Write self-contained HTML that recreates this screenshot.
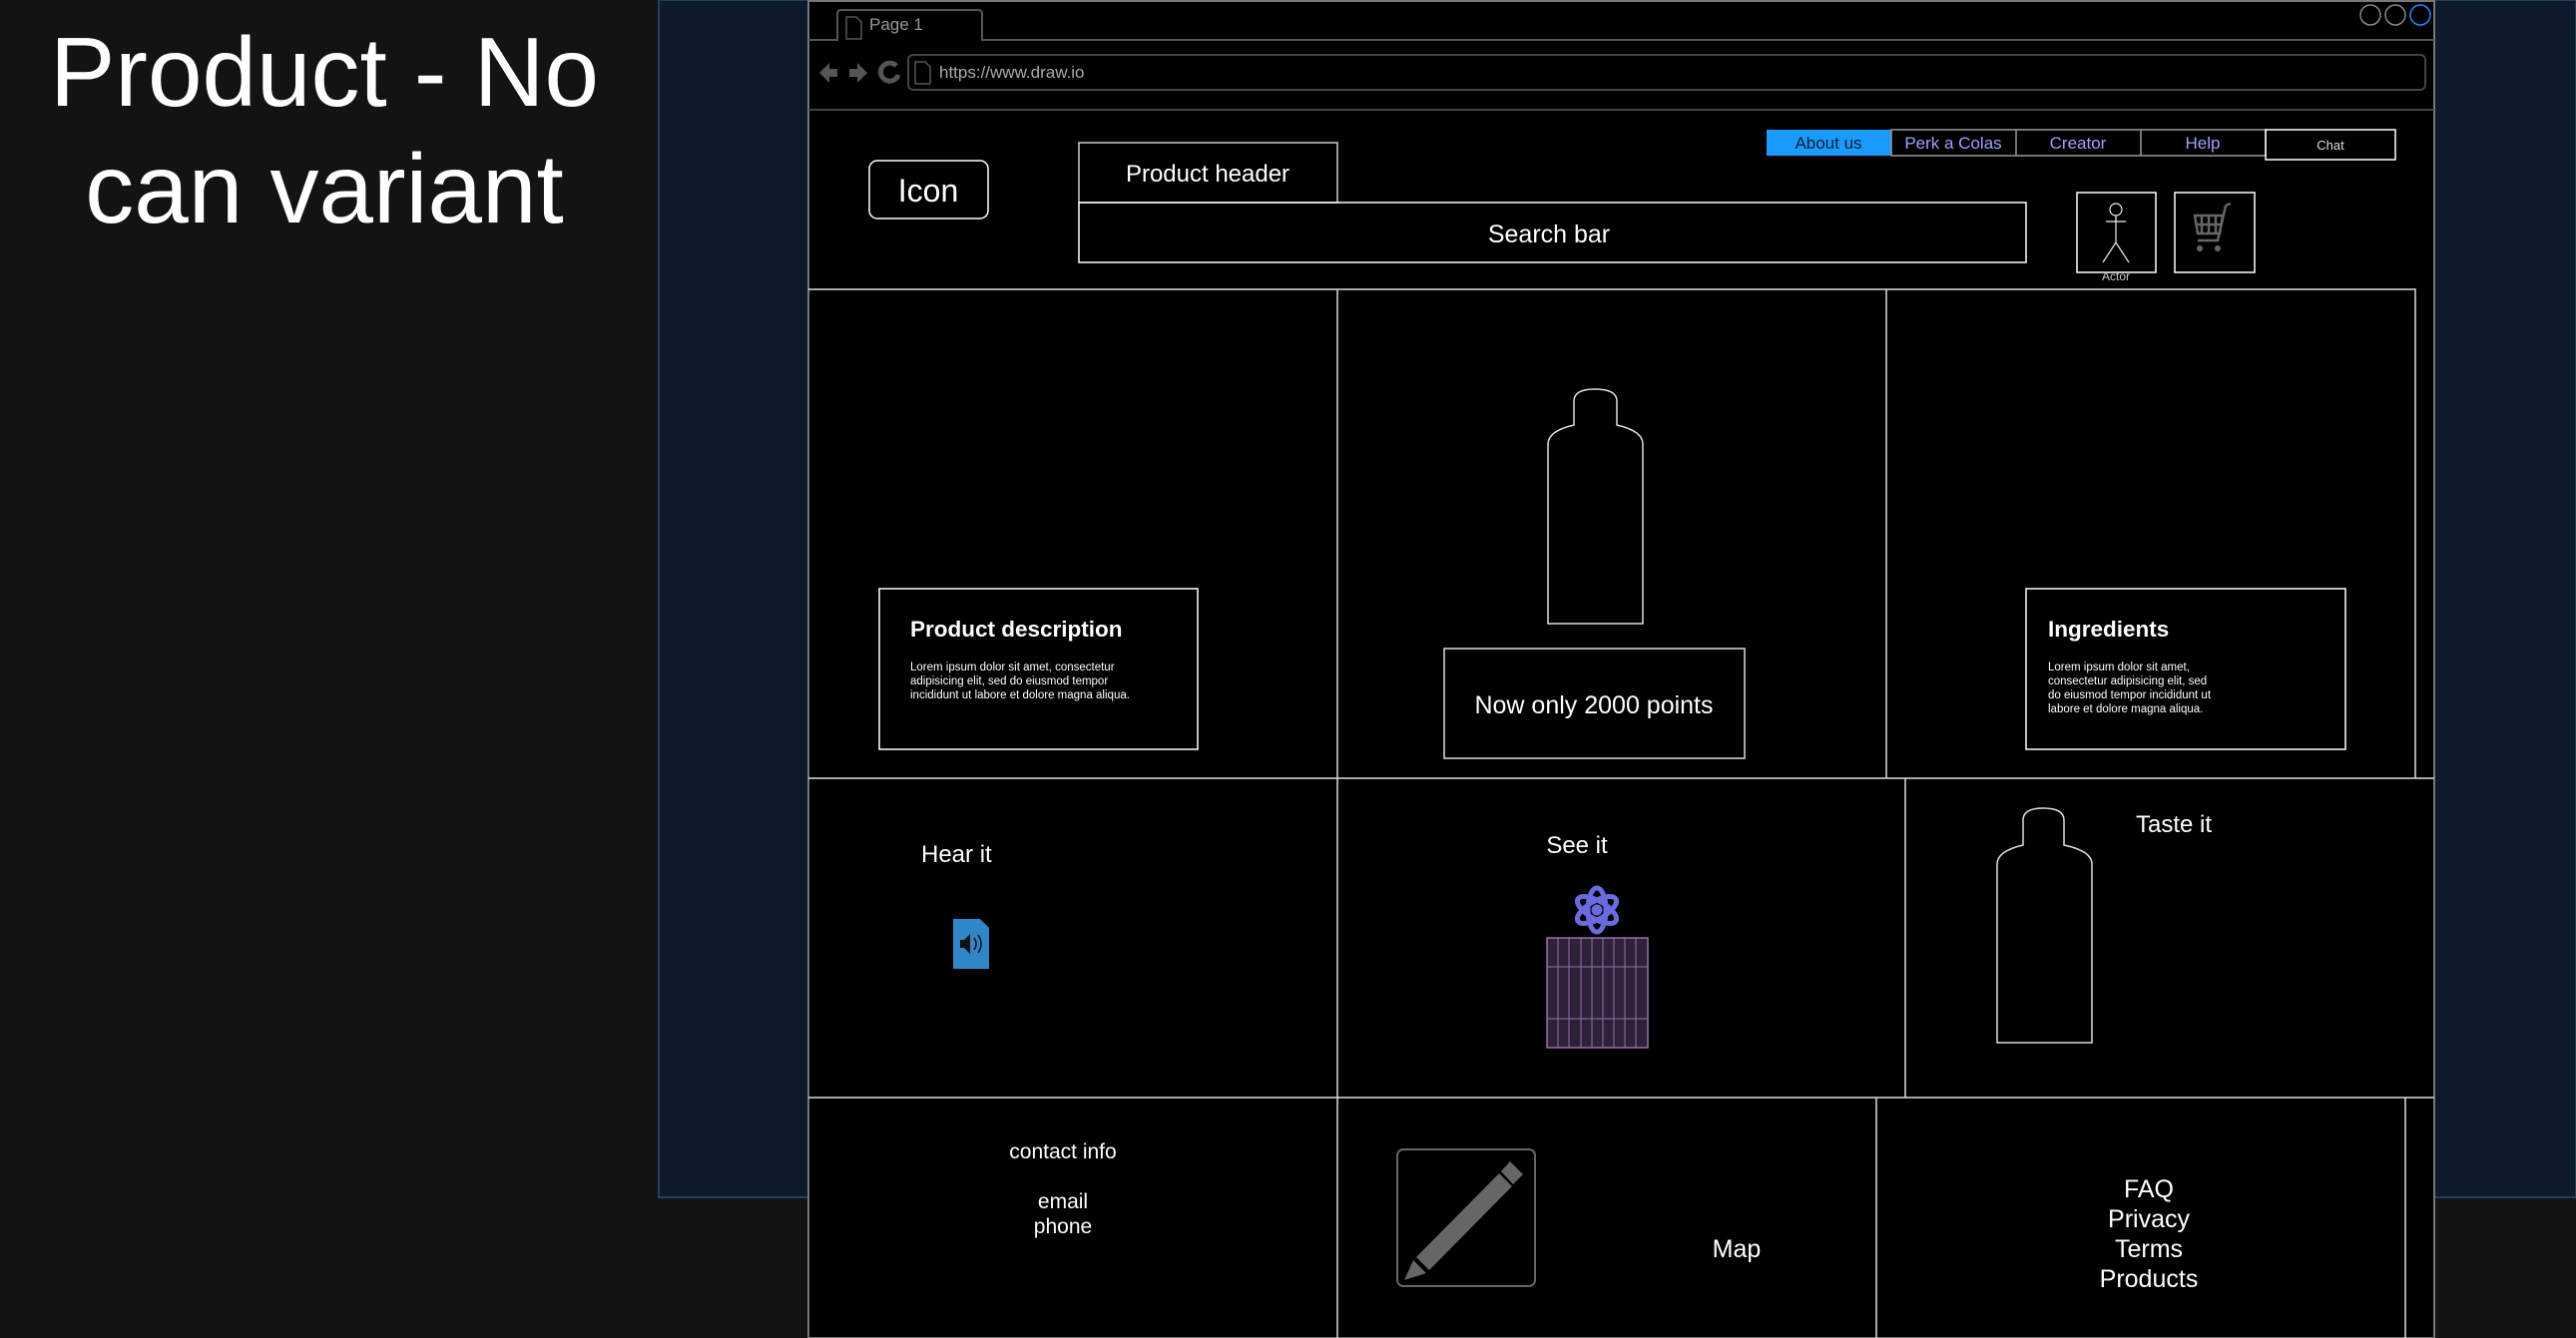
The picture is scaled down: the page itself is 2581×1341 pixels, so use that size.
<!DOCTYPE html>
<html><head><meta charset="utf-8"><style>
html,body{margin:0;padding:0;background:#131313;width:2581px;height:1341px;overflow:hidden;font-family:"Liberation Sans",sans-serif}
svg text{font-family:"Liberation Sans",sans-serif}
</style></head><body>
<svg width="2581" height="1341" viewBox="0 0 2581 1341" xmlns="http://www.w3.org/2000/svg">
<rect width="2581" height="1341" fill="#131313"/>
<text x="325" y="106" font-size="98" fill="#fff" text-anchor="middle">Product - No</text>
<text x="325" y="223" font-size="98" fill="#fff" text-anchor="middle">can variant</text>
<rect x="660" y="0" width="1921" height="1200" fill="#0d1a2c" stroke="#2a4a70" stroke-width="1.5"/>
<rect x="810" y="1" width="1629" height="1340" fill="#000" stroke="#777" stroke-width="2"/>
<path d="M810 40 H839 V14 Q839 10 843 10 H980 Q984 10 984 14 V40 H2439" fill="none" stroke="#555" stroke-width="2"/>
<path d="M848 17 h10 l5 5 v17 h-15z" fill="none" stroke="#555" stroke-width="1.5"/>
<text x="871" y="30" font-size="17" fill="#999">Page 1</text>
<circle cx="2375" cy="15" r="10" fill="none" stroke="#888" stroke-width="1.5"/>
<circle cx="2400" cy="15" r="10" fill="none" stroke="#888" stroke-width="1.5"/>
<circle cx="2425" cy="15" r="10" fill="none" stroke="#1a8cff" stroke-width="1.5"/>
<path d="M821 73 l10 -10 v6 h8 v8 h-8 v6z" fill="#555"/>
<path d="M869 73 l-10 -10 v6 h-8 v8 h8 v6z" fill="#555"/>
<path d="M898 66 a9 9 0 1 0 2 9" fill="none" stroke="#555" stroke-width="5"/>
<rect x="910" y="55" width="1520" height="35" rx="5" fill="none" stroke="#444" stroke-width="2"/>
<path d="M917 62 h10 l5 5 v17 h-15z" fill="none" stroke="#555" stroke-width="1.5"/>
<text x="941" y="78" font-size="17" fill="#aaa">https://www.draw.io</text>
<line x1="810" y1="110" x2="2439" y2="110" stroke="#444" stroke-width="2"/>
<rect x="871" y="161" width="119" height="58" rx="8" fill="none" stroke="#fff" stroke-width="1.5"/>
<text x="930" y="202" font-size="32" fill="#fff" text-anchor="middle">Icon</text>
<rect x="1081" y="143" width="259" height="60" fill="none" stroke="#ccc" stroke-width="1.5"/>
<text x="1210" y="182" font-size="24" fill="#fff" text-anchor="middle">Product header</text>
<rect x="1081" y="203" width="949" height="60" fill="none" stroke="#fff" stroke-width="1.5"/>
<text x="1552" y="243" font-size="25" fill="#fff" text-anchor="middle">Search bar</text>
<rect x="1770" y="130" width="125" height="26" fill="#1a9cff"/>
<rect x="1895" y="130" width="375" height="26" fill="none" stroke="#999" stroke-width="1.5"/>
<line x1="2020" y1="130" x2="2020" y2="156" stroke="#999" stroke-width="1.5"/>
<line x1="2145" y1="130" x2="2145" y2="156" stroke="#999" stroke-width="1.5"/>
<text x="1832" y="149" font-size="17" fill="#0a1a30" text-anchor="middle">About us</text>
<text x="1957" y="149" font-size="17" fill="#a0a0ff" text-anchor="middle">Perk a Colas</text>
<text x="2082" y="149" font-size="17" fill="#a0a0ff" text-anchor="middle">Creator</text>
<text x="2207" y="149" font-size="17" fill="#a0a0ff" text-anchor="middle">Help</text>
<rect x="2270" y="130" width="130" height="30" fill="none" stroke="#fff" stroke-width="1.5"/>
<text x="2335" y="150" font-size="13" fill="#ddd" text-anchor="middle">Chat</text>
<rect x="2081" y="193" width="79" height="80" fill="none" stroke="#fff" stroke-width="1.5"/>
<circle cx="2120" cy="210" r="6" fill="none" stroke="#eee" stroke-width="1.2"/>
<path d="M2110 222 h20 M2120 216 v27 M2107 263 l13 -20 l13 20" fill="none" stroke="#eee" stroke-width="1.2"/>
<text x="2120" y="281" font-size="12" fill="#ccc" text-anchor="middle">Actor</text>
<rect x="2179" y="193" width="80" height="80" fill="none" stroke="#fff" stroke-width="1.5"/>
<path d="M2230 206 l5 -2 M2230 206 l-8 35 h-20 M2199 216 h28 l-3 18 h-22z M2206 216 v18 M2213 216 v18 M2220 216 v18 M2200 225 h26" fill="none" stroke="#666" stroke-width="2.5"/>
<circle cx="2204" cy="249" r="3" fill="#666"/><circle cx="2222" cy="249" r="3" fill="#666"/>
<g fill="none" stroke="#ddd" stroke-width="1.5">
<path d="M810 290 H2420 V780 M1340 290 V1341 M1890 290 V780 M810 780 H2439 M1909 780 V1100 M810 1100 H2439 M1880 1100 V1341 M2410 1100 V1341"/>
</g>
<rect x="881" y="590" width="319" height="161" fill="none" stroke="#fff" stroke-width="1.5"/>
<text x="912" y="638" font-size="22.5" font-weight="bold" fill="#fff">Product description</text>
<text font-size="11.5" fill="#fff"><tspan x="912" y="672">Lorem ipsum dolor sit amet, consectetur</tspan><tspan x="912" y="686">adipisicing elit, sed do eiusmod tempor</tspan><tspan x="912" y="700">incididunt ut labore et dolore magna aliqua.</tspan></text>
<path d="M1551 625 V445 Q1551 432 1577 426 V402 Q1577 390 1598 390 Q1620 390 1620 402 V426 Q1646 432 1646 445 V625 Z" fill="none" stroke="#ddd" stroke-width="1.5"/>
<rect x="1447" y="650" width="301" height="110" fill="none" stroke="#ddd" stroke-width="1.5"/>
<text x="1597" y="715" font-size="25" fill="#fff" text-anchor="middle">Now only 2000 points</text>
<rect x="2030" y="590" width="320" height="161" fill="none" stroke="#fff" stroke-width="1.5"/>
<text x="2052" y="638" font-size="22.5" font-weight="bold" fill="#fff">Ingredients</text>
<text font-size="11.5" fill="#fff"><tspan x="2052" y="672">Lorem ipsum dolor sit amet,</tspan><tspan x="2052" y="686">consectetur adipisicing elit, sed</tspan><tspan x="2052" y="700">do eiusmod tempor incididunt ut</tspan><tspan x="2052" y="714">labore et dolore magna aliqua.</tspan></text>
<text x="923" y="864" font-size="24" fill="#fff">Hear it</text>
<path d="M955 921 h27 l9 9 v41 h-36z" fill="#2f87c8"/>
<path d="M962 942 h4 l6 -6 v20 l-6 -6 h-4z" fill="#111"/>
<path d="M976 940 q4 6 0 12 M980 937 q6 9 0 18" fill="none" stroke="#111" stroke-width="1.5"/>
<text x="1580" y="855" font-size="24" fill="#fff" text-anchor="middle">See it</text>
<g transform="translate(1600,912)" fill="none" stroke="#6b6be0" stroke-width="5">
<ellipse rx="9" ry="22"/><ellipse rx="9" ry="22" transform="rotate(60)"/><ellipse rx="9" ry="22" transform="rotate(-60)"/>
<circle r="3" fill="#6b6be0"/></g>
<rect x="1550" y="940" width="101" height="110" fill="#2d2238" stroke="#9a6fb0" stroke-width="1.5"/>
<g stroke="#9a6fb0" stroke-width="1"><path d="M1561 940V1050M1572 940V1050M1584 940V1050M1595 940V1050M1606 940V1050M1617 940V1050M1628 940V1050M1639 940V1050M1550 969H1651M1550 1021H1651"/></g>
<text x="2140" y="834" font-size="24" fill="#fff">Taste it</text>
<path d="M2001 1045 V866 Q2001 853 2027 847 V822 Q2027 810 2047 810 Q2068 810 2068 822 V847 Q2096 853 2096 866 V1045 Z" fill="none" stroke="#ddd" stroke-width="1.5"/>
<text x="1065" y="1161" font-size="21" fill="#fff" text-anchor="middle">contact info</text>
<text x="1065" y="1211" font-size="21" fill="#fff" text-anchor="middle">email</text>
<text x="1065" y="1236" font-size="21" fill="#fff" text-anchor="middle">phone</text>
<rect x="1400" y="1152" width="138" height="137" rx="6" fill="none" stroke="#666" stroke-width="2"/>
<path d="M1419 1260 L1502 1176 L1515 1189 L1432 1273 Z M1504 1174 l9 -10 l13 13 l-10 10z M1416 1263 l13 13 l-22 7z" fill="#666"/>
<text x="1740" y="1260" font-size="25" fill="#fff" text-anchor="middle">Map</text>
<g font-size="25" fill="#fff" text-anchor="middle">
<text x="2153" y="1200">FAQ</text><text x="2153" y="1230">Privacy</text><text x="2153" y="1260">Terms</text><text x="2153" y="1290">Products</text></g>
</svg>
</body></html>
